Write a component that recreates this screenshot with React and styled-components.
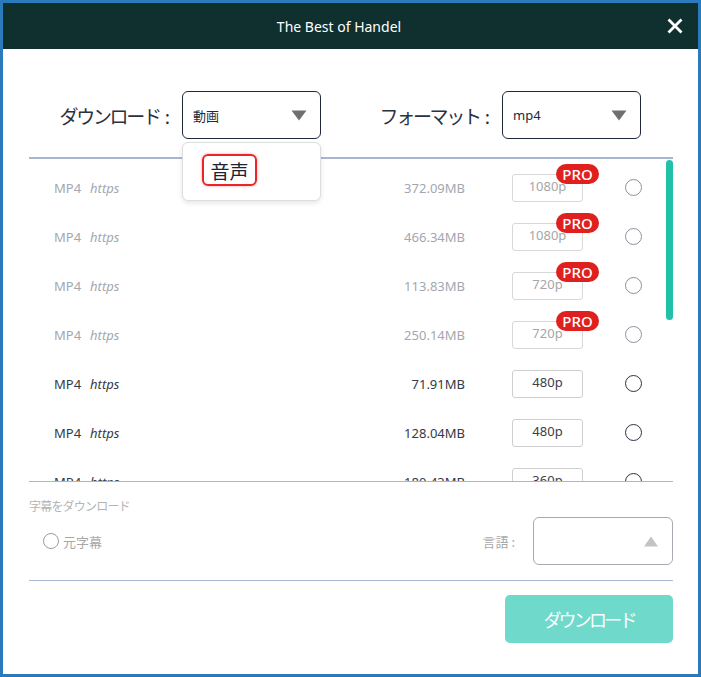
import React from 'react'
import styled, { createGlobalStyle } from 'styled-components'

const GlobalStyle = createGlobalStyle`
  html, body {
    margin: 0;
    padding: 0;
    background: #ffffff;
  }
  body {
    font-family: "Noto Sans", "Noto Sans CJK JP", sans-serif;
  }
  * {
    box-sizing: border-box;
  }
`

const Window = styled.div`
  width: 701px;
  height: 677px;
  border: 3px solid #2b7abb;
  display: flex;
  flex-direction: column;
  background: #fff;
  overflow: hidden;
`

const Header = styled.div`
  height: 46px;
  flex-shrink: 0;
  background: #10302f;
  display: flex;
  align-items: center;
  padding: 0 15px 0 8px;
`

const Title = styled.div`
  flex: 1;
  text-align: center;
  color: #ffffff;
  font-size: 14px;
  font-family: "Noto Sans", sans-serif;
`

const CloseButton = styled.div`
  width: 16px;
  height: 16px;
  display: flex;
`

const Body = styled.div`
  flex: 1;
  display: flex;
  flex-direction: column;
  padding: 42px 25px 0 26px;
`

const SelectRow = styled.div`
  display: flex;
  height: 48px;
  padding-right: 32px;
`

const SelectGroup = styled.div`
  display: flex;
  align-items: center;
  justify-content: flex-end;
  gap: 12px;
  ${(p) => (p.$grow ? 'flex: 1;' : 'width: 292px;')}
`

const FieldLabel = styled.span`
  font-family: "Noto Sans CJK JP", sans-serif;
  font-size: 19px;
  letter-spacing: -2.3px;
  color: #2a3140;
`

const Colon = styled.span`
  margin-left: 5px;
  letter-spacing: 0;
`

const Select = styled.div`
  position: relative;
  width: ${(p) => p.$width || 139}px;
  height: 48px;
  border: 1px solid ${(p) => (p.$muted ? '#a9a9b1' : '#1d2939')};
  border-radius: 6px;
  display: flex;
  align-items: center;
  justify-content: space-between;
  padding: 0 13px 0 10px;
  font-family: "Noto Sans", "Noto Sans CJK JP", sans-serif;
  font-size: 13px;
  color: #222a36;
`

const Popup = styled.div`
  position: absolute;
  top: calc(100% + 4px);
  left: -1px;
  width: 139px;
  height: 59px;
  background: #fff;
  border: 1px solid #dedede;
  border-radius: 6px;
  box-shadow: 0 2px 5px rgba(0, 0, 0, 0.1);
  z-index: 2;
`

const PopupItem = styled.div`
  margin: 11px 0 0 19px;
  width: 55px;
  height: 32px;
  border: 2px solid #e8252a;
  border-radius: 6px;
  box-shadow: 0 0 3px rgba(232, 37, 42, 0.45);
  display: flex;
  align-items: center;
  justify-content: center;
  font-family: "Noto Sans CJK JP", sans-serif;
  font-size: 19px;
  color: #1c2332;
`

const Divider = styled.div`
  height: ${(p) => p.$h || 1}px;
  background: #a8b6d4;
  margin-top: ${(p) => p.$mt || 0}px;
  flex-shrink: 0;
`

const List = styled.div`
  display: flex;
  height: 322px;
  flex-shrink: 0;
  overflow: hidden;
`

const Rows = styled.div`
  flex: 1;
  padding-top: 4px;
  overflow: hidden;
`

const Row = styled.div`
  display: flex;
  align-items: center;
  height: 49px;
  padding: 0 24px 0 25px;
  font-size: 13px;
  color: ${(p) => (p.$disabled ? '#a3a7b0' : '#333a47')};
`

const Name = styled.div`
  flex: 1;
  display: flex;
  gap: 9px;
`

const Link = styled.span`
  font-style: italic;
`

const Size = styled.div`
  text-align: right;
`

const Quality = styled.div`
  position: relative;
  margin-left: 47px;
  width: 71px;
  height: 28px;
  border: 1px solid ${(p) => (p.$disabled ? '#d8d8d8' : '#cfcfcf')};
  border-radius: 3px;
  display: flex;
  justify-content: center;
  align-items: center;
  padding-bottom: 3px;
  color: ${(p) => (p.$disabled ? '#a6a6a6' : '#3a404a')};
`

const ProBadge = styled.span`
  position: absolute;
  top: -11px;
  right: -17px;
  width: 43px;
  height: 20px;
  border-radius: 10px;
  background: #e0201e;
  color: #fff;
  font-size: 15px;
  font-weight: 500;
  line-height: 20px;
  text-align: center;
`

const Radio = styled.span`
  width: ${(p) => p.$size || 17}px;
  height: ${(p) => p.$size || 17}px;
  border-radius: 50%;
  border: 1.5px solid ${(p) => p.$color || '#2c3340'};
  margin-left: ${(p) => p.$ml || 0}px;
  flex-shrink: 0;
`

const ScrollTrack = styled.div`
  width: 7px;
  padding-top: 1px;
`

const ScrollThumb = styled.div`
  height: 160px;
  border-radius: 4px;
  background: #21c1a8;
`

const SubtitleTitle = styled.div`
  margin-top: 14px;
  line-height: 20px;
  font-family: "Noto Sans CJK JP", sans-serif;
  font-size: 12px;
  letter-spacing: -0.8px;
  color: #b4b4b4;
`

const SubtitleRow = styled.div`
  display: flex;
  align-items: center;
  height: 48px;
  margin-top: 1px;
`

const RadioOption = styled.label`
  flex: 1;
  display: flex;
  align-items: center;
  gap: 4px;
  margin-left: 14px;
  font-family: "Noto Sans CJK JP", sans-serif;
  font-size: 13px;
  color: #a8a8a8;
`

const LangLabel = styled.span`
  margin-right: 18px;
  font-family: "Noto Sans CJK JP", sans-serif;
  font-size: 13px;
  color: #a8a8a8;
`

const DownloadButton = styled.button`
  align-self: flex-end;
  margin-top: 14px;
  width: 168px;
  height: 48px;
  border: none;
  border-radius: 5px;
  background: #6fd9cb;
  color: #fff;
  font-family: "Noto Sans CJK JP", sans-serif;
  font-size: 18px;
  letter-spacing: -2.8px;
`

const Caret = ({ up, color }) => (
  <svg width="16" height="11" viewBox="0 0 16 11">
    {up ? (
      <path d="M1 10.5 L8 0.5 L15 10.5 Z" fill={color} />
    ) : (
      <path d="M0.5 0.5 L15.5 0.5 L8 10.5 Z" fill={color} />
    )}
  </svg>
)

const files = [
  { size: '372.09MB', quality: '1080p', pro: true },
  { size: '466.34MB', quality: '1080p', pro: true },
  { size: '113.83MB', quality: '720p', pro: true },
  { size: '250.14MB', quality: '720p', pro: true },
  { size: '71.91MB', quality: '480p' },
  { size: '128.04MB', quality: '480p' },
  { size: '180.43MB', quality: '360p' },
]

const App = () => {
  return (
    <Window>
      <GlobalStyle />
      <Header>
        <Title>The Best of Handel</Title>
        <CloseButton>
          <svg width="16" height="16" viewBox="0 0 16 16">
            <path d="M1.5 1.5 L14.5 14.5 M14.5 1.5 L1.5 14.5" stroke="#fff" strokeWidth="2.8" />
          </svg>
        </CloseButton>
      </Header>

      <Body>
        <SelectRow>
          <SelectGroup>
            <FieldLabel>ダウンロード<Colon>:</Colon></FieldLabel>
            <Select>
              <span>動画</span>
              <Caret color="#6f6f6f" />
              <Popup>
                <PopupItem>音声</PopupItem>
              </Popup>
            </Select>
          </SelectGroup>
          <SelectGroup $grow>
            <FieldLabel>フォーマット<Colon>:</Colon></FieldLabel>
            <Select>
              <span>mp4</span>
              <Caret color="#6f6f6f" />
            </Select>
          </SelectGroup>
        </SelectRow>

        <Divider $h={2} $mt={18} />

        <List>
          <Rows>
            {files.map((f, i) => (
              <Row key={i} $disabled={f.pro}>
                <Name>
                  <span>MP4</span>
                  <Link>https</Link>
                </Name>
                <Size>{f.size}</Size>
                <Quality $disabled={f.pro}>
                  {f.quality}
                  {f.pro && <ProBadge>PRO</ProBadge>}
                </Quality>
                <Radio $ml={42} $color={f.pro ? '#8d919b' : '#2c3340'} />
              </Row>
            ))}
          </Rows>
          <ScrollTrack>
            <ScrollThumb />
          </ScrollTrack>
        </List>

        <Divider />

        <SubtitleTitle>字幕をダウンロード</SubtitleTitle>
        <SubtitleRow>
          <RadioOption>
            <Radio $size={16} $color="#9c9c9c" />
            元字幕
          </RadioOption>
          <LangLabel>言語 :</LangLabel>
          <Select $width={140} $muted>
            <span />
            <Caret up color="#c3c3c3" />
          </Select>
        </SubtitleRow>

        <Divider $mt={15} />

        <DownloadButton>ダウンロード</DownloadButton>
      </Body>
    </Window>
  )
}

export default App
